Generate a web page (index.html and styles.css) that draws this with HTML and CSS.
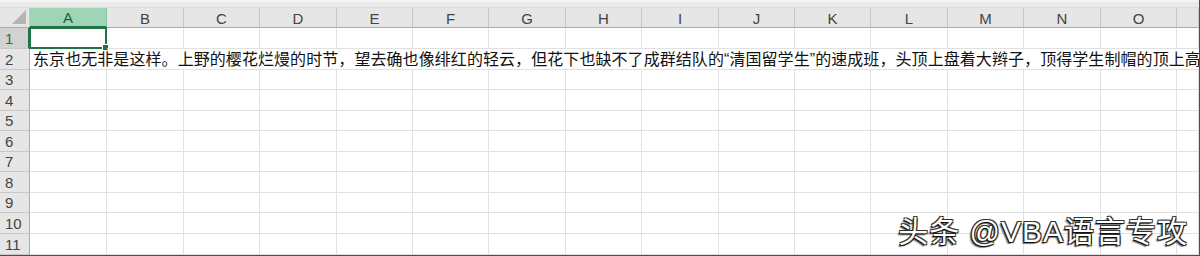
FILE: index.html
```html
<!DOCTYPE html>
<html lang="zh-CN">
<head>
  <meta charset="UTF-8">
  <title>Sheet1</title>
  <link rel="stylesheet" href="styles.css">
</head>
<body>
  <div class="fenetre">
    <div class="bande"></div>
    <div id="grille" class="grille"></div>
    <div class="filigrane">头条 @VBA语言专攻</div>
  </div>

  <script>
    const lettres = 'ABCDEFGHIJKLMNO'.split('');
    const hauteurs = [21, 21, 20, 21, 20, 21, 20, 21, 20, 21, 21];
    const texte = '东京也无非是这样。上野的樱花烂熳的时节，望去确也像绯红的轻云，但花下也缺不了成群结队的“清国留学生”的速成班，头顶上盘着大辫子，顶得学生制帽的顶上高高耸起，形成一座富士山。';
    const grille = document.getElementById('grille');
    grille.style.gridTemplateRows = '20px ' + hauteurs.map(h => h + 'px').join(' ');

    function cellule(classe, contenu) {
      const div = document.createElement('div');
      div.className = classe;
      if (contenu) div.textContent = contenu;
      grille.appendChild(div);
      return div;
    }

    // en-tetes de colonnes (la colonne P est coupee par le bord)
    cellule('coin');
    lettres.forEach((l, i) => {
      cellule(i === 0 ? 'entete-col actif' : 'entete-col', l);
    });
    cellule('entete-col');

    // lignes
    hauteurs.forEach((h, r) => {
      const n = r + 1;
      cellule(n === 1 ? 'entete-ligne actif' : 'entete-ligne', n);
      if (n === 2) {
        cellule('case debord', texte);
        return;
      }
      for (let i = 0; i <= lettres.length; i++) {
        const c = cellule('case');
        if (n === 1 && i === 0) {
          c.classList.add('selection');
          const poignee = document.createElement('span');
          poignee.className = 'poignee';
          c.appendChild(poignee);
        }
      }
    });
  </script>
</body>
</html>
```

FILE: styles.css
```css
body {
  margin: 0;
  background: #fff;
  font-family: "Liberation Sans", "Noto Sans CJK SC", sans-serif;
  color: #222;
}

.fenetre {
  position: relative;
  width: 1200px;
  height: 256px;
  overflow: hidden;
  box-sizing: border-box;
  border-right: 1px solid #3b3fd0;
  border-bottom: 1px solid #3b3fd0;
}

.bande {
  height: 8px;
  background: #e9e9e9;
  border-top: 2px solid #f4f4f4;
  box-sizing: border-box;
  border-bottom: 1px solid #dedede;
}

.grille {
  display: grid;
  grid-template-columns: 30px 77px 77px 76px 77px 76px 76px 77px 76px 77px 76px 76px 77px 76px 77px 76px minmax(0, 1fr);
}

.coin,
.entete-col,
.entete-ligne {
  background: #e6e6e6;
  color: #444;
  font-size: 15px;
  box-sizing: border-box;
  display: flex;
  align-items: center;
  justify-content: center;
}

.coin {
  position: relative;
  border-right: 1px solid #c8c8c8;
  border-bottom: 1px solid #ababab;
}

.coin::after {
  content: '';
  position: absolute;
  right: 3px;
  bottom: 3px;
  width: 0;
  height: 0;
  border-left: 14px solid transparent;
  border-bottom: 14px solid #b4b4b4;
}

.entete-col {
  border-right: 1px solid #c8c8c8;
  border-bottom: 1px solid #ababab;
  padding-top: 1px;
}

.entete-col.actif {
  background: #9fd5b7;
  color: #1e5e3a;
  border-right-color: #8cc2a4;
  border-bottom: 2px solid #217346;
}

.entete-ligne {
  border-right: 1px solid #ababab;
  border-bottom: 1px solid #c8c8c8;
  justify-content: flex-start;
  padding-left: 5px;
}

.entete-ligne.actif {
  background: #d2d2d2;
  color: #217346;
  border-right: 2px solid #217346;
}

.case {
  border-right: 1px solid #e1e1e1;
  border-bottom: 1px solid #e1e1e1;
  box-sizing: border-box;
  position: relative;
  min-width: 0;
}

.debord {
  grid-column: 2 / -1;
  border-right: none;
  white-space: nowrap;
  overflow: hidden;
  font-size: 16px;
  line-height: 21px;
  letter-spacing: 0.07px;
  padding-left: 3px;
  color: #111;
}

.selection {
  border: 2px solid #217346;
  margin: -1px 0 0 -1px;
}

.poignee {
  position: absolute;
  right: -4px;
  bottom: -4px;
  width: 5px;
  height: 5px;
  background: #217346;
  border: 1px solid #fff;
}

.filigrane {
  position: absolute;
  right: 11px;
  bottom: 8px;
  font-size: 30px;
  line-height: 31px;
  letter-spacing: 1px;
  color: #fff;
  text-shadow: -1px 1px 0 #111, 1px 1px 1px #111, -1px -1px 0 #333, 1px -1px 0 #333, -2px 2px 1px rgba(0,0,0,0.5);
}
```
